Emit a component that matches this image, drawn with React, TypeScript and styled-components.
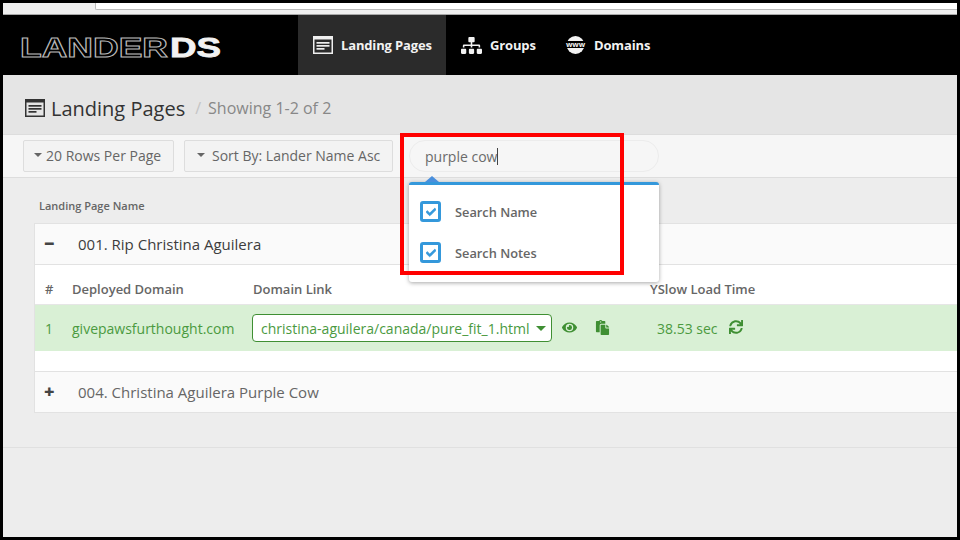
import React from "react";
import styled, { createGlobalStyle } from "styled-components";
import { FaCheck, FaEye, FaPaste, FaSitemap, FaSync } from "react-icons/fa";

const GlobalStyle = createGlobalStyle`
  html, body {
    margin: 0;
    padding: 0;
    background: #000;
    overflow: hidden;
  }
  * {
    box-sizing: border-box;
  }
`;

const styles = {
  Frame: styled.div`
    position: relative;
    display: flex;
    flex-direction: column;
    width: 960px;
    height: 540px;
    border: 3px solid #000;
    background: #ededed;
    overflow: hidden;
    font-family: "Open Sans", "Liberation Sans", sans-serif;
    color: #555;
  `,
  BrowserStrip: styled.div`
    height: 12px;
    flex: none;
    background: #f0f0f0;
    border-bottom: 1px solid #a8a8a8;
  `,
  AddressBox: styled.div`
    height: 7px;
    margin-left: 92px;
    background: #fff;
    border-left: 1px solid #bbb;
    border-bottom: 1px solid #bbb;
    border-bottom-left-radius: 2px;
  `,
  Nav: styled.nav`
    display: flex;
    height: 60px;
    flex: none;
    background: #000;
  `,
  LogoWrap: styled.div`
    display: flex;
    align-items: center;
    width: 295px;
    padding: 6px 0 0 17px;
  `,
  NavItem: styled.a<{ $active?: boolean; $width: number }>`
    display: flex;
    align-items: center;
    gap: 8px;
    width: ${p => p.$width}px;
    padding-left: 15px;
    background: ${p => (p.$active ? "#2b2b2b" : "transparent")};
    color: #f2f2f2;
    font-size: 13px;
    font-weight: 700;
    letter-spacing: -0.15px;
  `,
  PageHeader: styled.div`
    display: flex;
    align-items: center;
    height: 59px;
    flex: none;
    padding: 7px 0 0 22px;
    background: #e5e5e5;
  `,
  Title: styled.h1`
    margin: 0 0 0 6px;
    font-size: 20px;
    font-weight: 400;
    color: #333;
  `,
  Slash: styled.span`
    margin: 0 7px 0 10px;
    font-size: 16px;
    color: #c4c4c4;
  `,
  Showing: styled.span`
    font-size: 16px;
    color: #888;
  `,
  Toolbar: styled.div`
    display: flex;
    align-items: center;
    height: 44px;
    flex: none;
    padding-left: 20px;
    background: #f6f6f6;
    border-top: 1px solid #ddd;
    border-bottom: 1px solid #ddd;
  `,
  ToolButton: styled.button<{ $width: number; $gap: number; $pad: number }>`
    display: flex;
    align-items: center;
    gap: ${p => p.$gap}px;
    width: ${p => p.$width}px;
    height: 32px;
    margin-right: 10px;
    padding: 0 0 2px ${p => p.$pad}px;
    border: 1px solid #ddd;
    border-radius: 2px;
    background: #f3f3f3;
    color: #666;
    font-family: inherit;
    font-size: 14px;
  `,
  Caret: styled.span<{ $color?: string; $size?: number }>`
    display: inline-block;
    width: 0;
    height: 0;
    flex: none;
    border-left: ${p => p.$size ?? 4}px solid transparent;
    border-right: ${p => p.$size ?? 4}px solid transparent;
    border-top: ${p => p.$size ?? 4}px solid ${p => p.$color ?? "#666"};
  `,
  SearchWrap: styled.div`
    position: relative;
    width: 250px;
    height: 32px;
    margin-left: 6px;
  `,
  SearchPill: styled.div`
    display: flex;
    align-items: center;
    height: 100%;
    padding-left: 15px;
    border: 1px solid #ececec;
    border-radius: 16px;
    background: #f6f6f6;
    color: #6b6b6b;
    font-size: 14px;
  `,
  Cursor: styled.span`
    display: inline-block;
    width: 1px;
    height: 17px;
    background: #444;
  `,
  Popover: styled.div`
    position: absolute;
    top: 42px;
    left: 0;
    z-index: 2;
    width: 250px;
    height: 100px;
    padding-top: 16px;
    background: #fff;
    border-top: 3px solid #3498db;
    border-radius: 3px;
    box-shadow: 0 1px 4px rgba(0, 0, 0, 0.35);
  `,
  PopoverArrow: styled.span`
    position: absolute;
    top: -9px;
    left: 16px;
    border-left: 7px solid transparent;
    border-right: 7px solid transparent;
    border-bottom: 6px solid #4a8fdc;
  `,
  CheckRow: styled.label`
    display: flex;
    align-items: center;
    gap: 14px;
    height: 21px;
    margin: 0 0 20px 11px;
    font-size: 12.8px;
    font-weight: 600;
    color: #666;
  `,
  CheckBox: styled.span`
    display: flex;
    align-items: center;
    justify-content: center;
    width: 21px;
    height: 21px;
    border: 3px solid #3498db;
    border-radius: 3px;
    background: #fff;
    color: #3498db;
    font-size: 10px;

    svg {
      stroke: currentColor;
      stroke-width: 40px;
    }
  `,
  Content: styled.main`
    height: 270px;
    flex: none;
    padding: 20px 0 0 31px;
    border-bottom: 1px solid #e0e0e0;
  `,
  ColumnLabel: styled.div`
    height: 25px;
    padding-left: 5px;
    font-size: 11px;
    font-weight: 600;
    line-height: 15px;
    color: #666;
  `,
  Card: styled.section`
    margin-right: -4px;
    border: 1px solid #e2e2e2;
    background: #fff;
  `,
  CardHeader: styled.div<{ $dim?: boolean; $border?: boolean }>`
    display: flex;
    align-items: center;
    height: ${p => (p.$border ? 41 : 40)}px;
    background: #fafafa;
    color: ${p => (p.$dim ? "#666" : "#3d3d3d")};
    font-size: 15px;
    border-bottom: ${p => (p.$border ? "1px solid #e2e2e2" : "none")};
  `,
  Toggle: styled.span`
    width: 43px;
    margin-top: -3px;
    padding-left: 9px;
    font-size: 18px;
    font-weight: 800;
    line-height: 18px;
    color: #444;
  `,
  Grid: styled.div`
    display: grid;
    grid-template-columns: 27px 181px 397px 1fr;
    align-items: center;
    padding-left: 10px;
  `,
  TableHead: styled.div`
    height: 40px;
    padding-top: 8px;
    border-bottom: 1px solid #e6e6e6;
    font-size: 13px;
    font-weight: 600;
    color: #666;
  `,
  DataRow: styled.div`
    height: 46px;
    background: #d9f0d5;
    color: #4b9a3f;
    font-size: 14px;
  `,
  Spacer: styled.div`
    height: 21px;
    border-bottom: 1px solid #e2e2e2;
  `,
  LinkCell: styled.div`
    display: flex;
    align-items: center;
    color: #3f8f33;
  `,
  LinkSelect: styled.div`
    display: flex;
    align-items: center;
    justify-content: space-between;
    width: 300px;
    height: 28px;
    margin-left: -1px;
    padding: 0 5px 0 8px;
    border: 1px solid #3f8f33;
    border-radius: 4px;
    background: #fff;
    color: #4b9a3f;
    font-size: 14px;
    white-space: nowrap;
  `,
  EyeButton: styled.span`
    display: flex;
    margin: -2px 0 0 10px;
    font-size: 15px;
  `,
  CopyButton: styled.span`
    display: flex;
    margin: -2px 0 0 18px;
    font-size: 15px;
  `,
  TimeCell: styled.div`
    display: flex;
    align-items: center;
    gap: 11px;
    padding-left: 7px;
  `,
  RefreshButton: styled.span`
    display: flex;
    margin-top: -2px;
    color: #3f8f33;
    font-size: 14px;
  `,
  Annotation: styled.div`
    position: absolute;
    top: 130px;
    left: 397px;
    z-index: 3;
    width: 224px;
    height: 142px;
    border: 4px solid #f00;
    pointer-events: none;
  `
};

const PagesIcon = ({ color, lines, size }: { color: string; lines: string; size: number }) => (
  <svg width={size} height={(size * 18) / 20} viewBox="0 0 20 18">
    <rect x="0" y="0" width="20" height="18" fill={color} />
    <rect x="1.5" y="3.5" width="17" height="13" fill={lines} />
    <rect x="3.5" y="6" width="13" height="1.7" fill={color} />
    <rect x="3.5" y="9" width="13" height="1.7" fill={color} />
    <rect x="3.5" y="12" width="8" height="1.7" fill={color} />
  </svg>
);

const WwwIcon = () => (
  <svg width="21" height="18" viewBox="0 0 21 18">
    <circle cx="10.5" cy="9" r="9" fill="#f2f2f2" />
    <rect x="0" y="5" width="21" height="7" fill="#000" />
    <text x="10.5" y="11" fontSize="7.5" fontWeight="700" textAnchor="middle" fill="#f2f2f2" fontFamily="Open Sans, sans-serif">
      www
    </text>
  </svg>
);

const Logo = () => (
  <svg width="204" height="36" viewBox="0 0 204 36">
    <text
      x="0"
      y="27"
      fontSize="27"
      fontFamily="Liberation Sans, sans-serif"
      fontWeight="700"
      fill="#000"
      stroke="#b8b8b8"
      strokeWidth="1"
      textLength="148"
      lengthAdjust="spacingAndGlyphs"
    >
      LANDER
    </text>
    <text
      x="150"
      y="27"
      fontSize="27"
      fontFamily="Liberation Sans, sans-serif"
      fontWeight="700"
      fill="#f2f2f2"
      stroke="#f2f2f2"
      strokeWidth="0.8"
      textLength="51"
      lengthAdjust="spacingAndGlyphs"
    >
      DS
    </text>
  </svg>
);

export default function App() {
  return (
    <>
      <GlobalStyle />
      <styles.Frame>
        <styles.BrowserStrip>
          <styles.AddressBox />
        </styles.BrowserStrip>

        <styles.Nav>
          <styles.LogoWrap>
            <Logo />
          </styles.LogoWrap>
          <styles.NavItem $active $width={148}>
            <PagesIcon color="#efefef" lines="#2b2b2b" size={20} />
            Landing Pages
          </styles.NavItem>
          <styles.NavItem $width={104}>
            <FaSitemap size={21} />
            Groups
          </styles.NavItem>
          <styles.NavItem $width={160}>
            <WwwIcon />
            Domains
          </styles.NavItem>
        </styles.Nav>

        <styles.PageHeader>
          <PagesIcon color="#333" lines="#e5e5e5" size={20} />
          <styles.Title>Landing Pages</styles.Title>
          <styles.Slash>/</styles.Slash>
          <styles.Showing>Showing 1-2 of 2</styles.Showing>
        </styles.PageHeader>

        <styles.Toolbar>
          <styles.ToolButton $width={151} $gap={4} $pad={10}>
            <styles.Caret />
            20 Rows Per Page
          </styles.ToolButton>
          <styles.ToolButton $width={209} $gap={7} $pad={12}>
            <styles.Caret />
            Sort By: Lander Name Asc
          </styles.ToolButton>
          <styles.SearchWrap>
            <styles.SearchPill>
              purple cow
              <styles.Cursor />
            </styles.SearchPill>
            <styles.Popover>
              <styles.PopoverArrow />
              <styles.CheckRow>
                <styles.CheckBox>
                  <FaCheck />
                </styles.CheckBox>
                Search Name
              </styles.CheckRow>
              <styles.CheckRow>
                <styles.CheckBox>
                  <FaCheck />
                </styles.CheckBox>
                Search Notes
              </styles.CheckRow>
            </styles.Popover>
          </styles.SearchWrap>
        </styles.Toolbar>

        <styles.Content>
          <styles.ColumnLabel>Landing Page Name</styles.ColumnLabel>
          <styles.Card>
            <styles.CardHeader $border>
              <styles.Toggle>−</styles.Toggle>
              001. Rip Christina Aguilera
            </styles.CardHeader>
            <styles.TableHead as={styles.Grid}>
              <span>#</span>
              <span>Deployed Domain</span>
              <span>Domain Link</span>
              <span>YSlow Load Time</span>
            </styles.TableHead>
            <styles.DataRow as={styles.Grid}>
              <span>1</span>
              <span>givepawsfurthought.com</span>
              <styles.LinkCell>
                <styles.LinkSelect>
                  christina-aguilera/canada/pure_fit_1.html
                  <styles.Caret $color="#3f8f33" $size={5} />
                </styles.LinkSelect>
                <styles.EyeButton>
                  <FaEye />
                </styles.EyeButton>
                <styles.CopyButton>
                  <FaPaste />
                </styles.CopyButton>
              </styles.LinkCell>
              <styles.TimeCell>
                38.53 sec
                <styles.RefreshButton>
                  <FaSync />
                </styles.RefreshButton>
              </styles.TimeCell>
            </styles.DataRow>
            <styles.Spacer />
            <styles.CardHeader $dim>
              <styles.Toggle>+</styles.Toggle>
              004. Christina Aguilera Purple Cow
            </styles.CardHeader>
          </styles.Card>
        </styles.Content>

        <styles.Annotation />
      </styles.Frame>
    </>
  );
}
